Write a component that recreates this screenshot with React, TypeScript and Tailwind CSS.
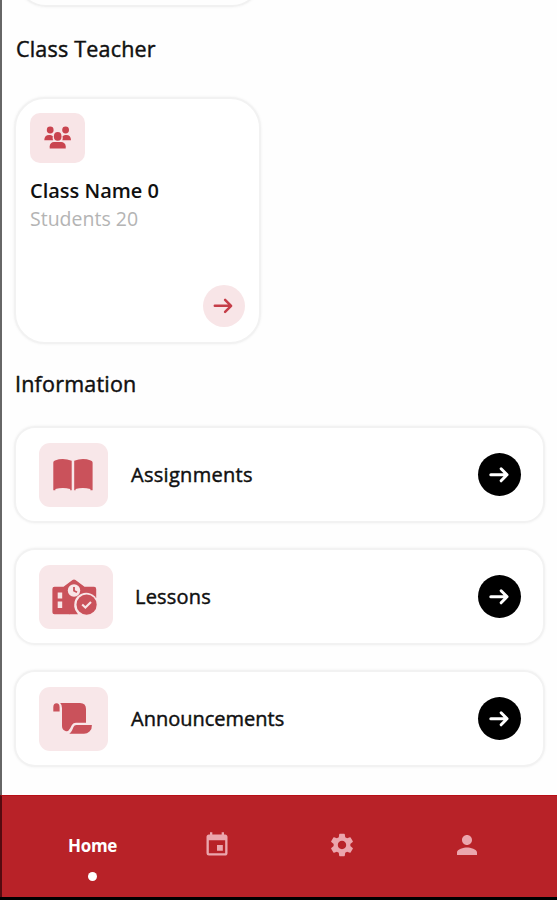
import type { ReactNode } from "react";
import { MdEvent, MdPerson, MdSettings } from "react-icons/md";

function Arrow({ width = 2.6 }: { width?: number }) {
  return (
    <svg width="22" height="20" viewBox="0 0 22 20" fill="none" stroke="currentColor" strokeWidth={width} strokeLinecap="round" strokeLinejoin="round">
      <path d="M1.8 9.8H17.8M12.1 3.8L18.1 9.8L12.1 15.8" />
    </svg>
  );
}

function GroupIcon() {
  return (
    <svg width="28" height="24" viewBox="0 0 28 24" fill="#c9444f">
      <circle cx="6.2" cy="4" r="3.4" />
      <circle cx="21.6" cy="4" r="3.4" />
      <path d="M0.3 14.2C0.3 11 2.2 9.1 5 9.1C6.6 9.1 8 9.5 8.8 10.3C8.5 11.8 8.6 13 9 14.2Z" />
      <path d="M27 14.2C27 11 25.2 9.1 22.4 9.1C21 9.1 19.4 9.5 18.6 10.3C18.9 11.8 18.8 13 18.4 14.2Z" />
      <ellipse cx="13.7" cy="10.4" rx="3.8" ry="4.3" />
      <path d="M5.7 22.4V20.2C5.7 17.7 7.7 16 10 16H17.2C19.5 16 21.7 17.7 21.7 20.2V22.4Z" />
    </svg>
  );
}

function BookIcon() {
  return (
    <svg width="40" height="34" viewBox="0 0 40 34" fill="#ca525b">
      <path d="M0.3 4.5Q0.3 3 2 2.4Q10 -0.6 18.7 2.7V32.3H17.2V31Q10 29 2.4 31V32.3H0.3Z" />
      <path d="M21.2 2.7Q29.7 -0.6 37.7 2.4Q39.6 3 39.6 4.5V32.3H37.4V31Q29.7 29 22.6 31V32.3H21.2Z" />
    </svg>
  );
}

function SchoolIcon() {
  return (
    <svg width="46" height="38" viewBox="0 0 46 38">
      <path d="M2.5 8.8H11.5L20.5 2Q22 0.9 23.5 2L32.5 8.8H42Q44.2 8.8 44.2 11V20H27L18 36.3H2.5Q0.4 36.3 0.4 34.2V11Q0.4 8.8 2.5 8.8Z" fill="#ca525b" />
      <path d="M5.7 14.5H10.2V20.5H5.7ZM5.7 23.5H10.2V30H5.7Z" fill="#f8e5e7" />
      <circle cx="22" cy="12.5" r="6.2" fill="#f8e5e7" />
      <path d="M22 9V12.7L25 14.2" fill="none" stroke="#ca525b" strokeWidth="1.8" />
      <circle cx="34.2" cy="26.7" r="12" fill="#f8e5e7" />
      <circle cx="34.6" cy="26.7" r="10.1" fill="#ca525b" />
      <path d="M30.2 26.5L33.4 29.6L39 23.9" fill="none" stroke="#f8e5e7" strokeWidth="2.1" />
      <path d="M17.5 36.3V29Q17.5 25 22 24.4V28Q22.5 32.5 26 36.3Z" fill="#ca525b" />
    </svg>
  );
}

function ScrollIcon() {
  return (
    <svg width="40" height="34" viewBox="0 0 40 34" fill="#ca525b">
      <path d="M0.3 9.4V5Q0.3 1.2 3.5 1.2Q6.6 1.2 6.6 5V9.4Z" />
      <path d="M7.2 1H27Q33 1 33 7V20.7H23Q20.3 20.7 18.9 23L17.2 26.2Q15.2 30 12.5 29.1Q9 28 9 24V6Q9 2.8 7.2 1Z" />
      <path d="M16.3 31.8Q18.1 30.5 19 28.5L20.5 25Q21.3 23 23.4 23H38.9Q39.2 26.8 36.5 29.5Q34.2 31.8 31 31.8Z" />
    </svg>
  );
}

function InfoRow({ icon, label, wide = false, tracking }: { icon: ReactNode; label: string; wide?: boolean; tracking: string }) {
  return (
    <div className="flex h-[97px] w-[531px] items-center rounded-[21px] border-2 border-[#f2f2f2] bg-white pr-[22px] pl-[23px] shadow-[0_0_3px_#f1f1f1]">
      <div className={`${wide ? "w-[74px]" : "w-[69px]"} flex h-16 items-center justify-center rounded-[11px] bg-[#f8e7e9] pr-[2px]`}>{icon}</div>
      <span className={`${wide ? "ml-[22px]" : "ml-[23px]"} text-[20px] leading-none whitespace-nowrap [-webkit-text-stroke:0.45px_#101010] ${tracking}`}>{label}</span>
      <div className="ml-auto flex size-[43px] items-center justify-center rounded-full bg-black text-white">
        <Arrow width={3} />
      </div>
    </div>
  );
}

export default function App() {
  return (
    <div className="flex h-[900px] w-[557px] flex-col overflow-hidden bg-[#fefefe] font-['Open_Sans',sans-serif] text-[#101010]">
      <main className="flex h-[795px] flex-col items-start border-l-2 border-[#666] pl-[12px]">
        <div className="flex h-[10px] w-[252px] items-end overflow-hidden pb-[3px] pl-[2px]">
          <div className="h-[90px] w-[246px] shrink-0 rounded-[30px] border-2 border-[#f1f1f1] shadow-[0_0_3px_#f1f1f1]" />
        </div>
        <h2 className="mt-[27px] ml-[2px] h-6 text-[21.5px] leading-6 tracking-[0.2px] [-webkit-text-stroke:0.45px_#101010]">Class Teacher</h2>
        <section className="mt-[36px] flex h-[247px] w-[247px] flex-col rounded-[31px] border-2 border-[#f2f2f2] bg-white px-[14px] pt-[14px] pb-[15px] shadow-[0_0_3px_#f1f1f1]">
          <div className="flex h-[50px] w-[55px] items-center justify-center rounded-[10px] bg-[#f8e5e7]">
            <GroupIcon />
          </div>
          <h3 className="mt-[16px] h-6 text-[20px] leading-6 font-semibold whitespace-nowrap">Class Name 0</h3>
          <p className="mt-[4px] h-6 text-[19.5px] leading-6 font-normal whitespace-nowrap text-[#b4b4b4]">Students 20</p>
          <div className="mt-auto ml-auto flex size-[42px] items-center justify-center rounded-full bg-[#f8e5e7] text-[#c53d48]">
            <Arrow width={2.5} />
          </div>
        </section>
        <h2 className="mt-[28px] ml-px h-6 text-[21.5px] leading-6 tracking-[0.2px] [-webkit-text-stroke:0.45px_#101010]">Information</h2>
        <div className="mt-[30px] flex flex-col gap-[25px]">
          <InfoRow icon={<BookIcon />} label="Assignments" tracking="tracking-[0.3px]" />
          <InfoRow icon={<SchoolIcon />} label="Lessons" wide tracking="tracking-[0.2px]" />
          <InfoRow icon={<ScrollIcon />} label="Announcements" tracking="tracking-[0px]" />
        </div>
      </main>
      <nav className="flex h-[102px] items-start border-t border-l-2 border-t-[#b80e16] border-l-[#540b10] bg-[#b82228] text-[#eba6ad]">
        <div className="ml-[28px] flex w-[125px] flex-col items-center pt-[38px] text-white">
          <span className="text-[17px] leading-6 font-bold tracking-[-0.3px]">Home</span>
          <span className="mt-[14px] size-[9px] rounded-full bg-white" />
        </div>
        <div className="flex w-[125px] justify-center pt-[35px] pr-[2px]"><MdEvent size={28} /></div>
        <div className="flex w-[125px] justify-center pt-[35px] pr-[2px]"><MdSettings size={28} /></div>
        <div className="flex w-[125px] justify-center pt-[34px] pr-[2px]"><MdPerson size={30} /></div>
      </nav>
      <div className="h-[3px] bg-black" />
    </div>
  );
}
